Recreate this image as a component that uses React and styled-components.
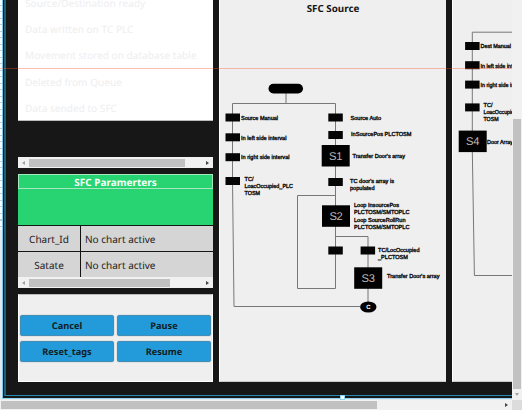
import React from "react";
import styled, { createGlobalStyle } from "styled-components";

const GlobalStyle = createGlobalStyle`
  * { box-sizing: border-box; }
  body { margin: 0; overflow: hidden; background: #f0f0f0; font-family: "Noto Sans", sans-serif; text-rendering: geometricPrecision; }
`;

const Window = styled.div`
  position: relative;
  display: grid;
  grid-template-columns: 512px 10px;
  grid-template-rows: 400px 10px;
  width: 522px;
  height: 410px;
  overflow: hidden;
`;

const Canvas = styled.div`
  display: grid;
  grid-template-columns: 2px 510px;
  overflow: hidden;
  background: #e4e9ec;
`;

const DesignGrid = styled.div`
  height: 230px;
  background: repeating-linear-gradient(#f8fbfd 0 5px, #b9cdd9 5px 6px, #f8fbfd 6px 6.5px);
`;

const Frame = styled.div`
  height: 399px;
  border-left: 1px solid #80cbe9;
  border-bottom: 1px solid #8fd3ef;
  background: #171717;
  padding: 0 0 2px 1px;
`;

const Selection = styled.div`
  height: 396px;
  border-left: 2px solid #205d76;
  border-bottom: 1px solid #2589b2;
  padding-left: 12px;
  display: grid;
  grid-template-columns: 195px 227px 60px;
  column-gap: 6px;
`;

const Sidebar = styled.div`
  display: flex;
  flex-direction: column;
  height: 382px;
`;

const StatusPanel = styled.div`
  height: 121px;
  margin-bottom: 36px;
  background: #fff;
  border-bottom: 1px solid #bbb;
  padding-left: 7px;
  overflow: hidden;
`;

const StatusList = styled.div`
  margin-top: -10px;
`;

const Status = styled.div`
  height: 26.2px;
  line-height: 26px;
  font-size: 10.1px;
  white-space: nowrap;
  color: #eeeeef;
`;

const ScrollTrack = styled.div`
  display: flex;
  align-items: center;
  height: ${(p) => p.$height || 11}px;
  background: #f1f1f1;
  padding-left: ${(p) => p.$start || 0}px;
  padding-right: ${(p) => p.$end ?? 4}px;
`;

const Thumb = styled.div`
  width: ${(p) => p.$width}px;
  height: ${(p) => p.$height || 8}px;
  margin-right: auto;
  background: #c1c1c1;
`;

const Arrow = styled.i`
  border: solid transparent;
  border-width: 2.5px 0 2.5px 3px;
  border-left-color: ${(p) => (p.$left ? "transparent" : "#444")};
  ${(p) => p.$left && "border-width: 2.5px 3px 2.5px 0; border-right-color: #a3a3a3; margin-right: 4px;"}
`;

const Parameters = styled.div`
  margin-top: 6px;
  height: 103px;
`;

const ParameterTitle = styled.div`
  height: 15px;
  border: 1px solid #a5e8bf;
  background: #28d372;
  color: #f5fff8;
  font-weight: 700;
  font-size: 10px;
  line-height: 14px;
  text-align: center;
`;

const GreenBlock = styled.div`
  height: 36px;
  background: #28d372;
`;

const ParameterRow = styled.div`
  display: grid;
  grid-template-columns: 63px 132px;
  height: ${(p) => p.$height}px;
  border-top: ${(p) => p.$line || 1}px solid #161616;
  background: #d5d5d5;
  color: #222;
  font-size: 10px;
  line-height: 26px;
`;

const Key = styled.div`
  text-align: center;
  border-right: 1px solid #111;
  height: 100%;
`;

const Value = styled.div`
  padding-left: 4px;
`;

const Actions = styled.div`
  display: grid;
  grid-template-columns: 94px 94px;
  grid-template-rows: 21px 21px;
  gap: 5px 3px;
  align-content: start;
  margin-top: 6px;
  height: 88px;
  padding: 20px 2px;
  background: #efefef;
  border: 1px solid #fff;
  border-top-color: #bbb;
  padding-left: 1px;
`;

const Action = styled.button`
  border: 1px solid #438db7;
  border-radius: 2px;
  padding: 0;
  background: #239bda;
  color: #111b22;
  font: 700 9.2px/19px "Noto Sans", sans-serif;
  text-rendering: geometricPrecision;
  box-shadow: 0 0 0 0.5px #d5d5d5;
`;

const ChartPanel = styled.div`
  height: 382px;
  overflow: hidden;
  background: #efefef;
  border-left: 1px solid #fff;
  border-bottom: 1px solid #ccc;
`;

const ChartTitle = styled.div`
  height: 18px;
  text-align: center;
  font-size: 9.8px;
  line-height: 17px;
  font-weight: 700;
  color: #161616;
`;

const Drawing = styled.svg`
  display: block;
  overflow: hidden;
`;

const Wire = styled.path`
  fill: none;
  stroke: #777;
  stroke-width: 1;
`;

const Caption = styled.text`
  font-family: "Liberation Sans", sans-serif;
  font-size: 5.8px;
  font-weight: 400;
  fill: #111;
  stroke: #111;
  stroke-width: 0.4px;
  text-rendering: geometricPrecision;
`;

const StateName = styled.text`
  font-family: "Liberation Sans", sans-serif;
  font-size: 11.2px;
  fill: #b9b9b9;
`;

const VerticalTrack = styled.div`
  display: flex;
  flex-direction: column;
  align-items: center;
  background: #f1f1f1;
  padding-top: 119px;
`;

const VerticalThumb = styled.div`
  width: 8px;
  height: 270px;
  background: #c1c1c1;
`;

const DownArrow = styled.i`
  margin-top: 4px;
  border: solid transparent;
  border-width: 3px 2.5px 0;
  border-top-color: #a3a3a3;
`;

const Corner = styled.div`
  background: #dcdcdc;
`;

const GuideLine = styled.div`
  position: absolute;
  top: 68px;
  left: 0;
  width: 512px;
  height: 1px;
  background: rgba(255, 75, 45, 0.36);
`;

const Handle = styled.div`
  position: absolute;
  left: 340px;
  top: 395px;
  width: 5px;
  height: 5px;
  background: #fff;
  border: 1px solid #8bd5f3;
`;

const statuses = ["Source/Destination ready", "Data written on TC PLC", "Movement stored on database table", "Deleted from Queue", "Data sended to SFC"];

const sourceLabels = [
  [241, 120, 37, "Source Manual"], [241, 139.5, 45.5, "In left side interval"],
  [241, 159.1, 48.5, "In right side interval"], [244.5, 180.7, 9, "TC/"],
  [244.5, 187.7, 48.5, "LoacOccupied_PLC"], [244.5, 195, 15.5, "TOSM"],
  [350.5, 119.5, 30.5, "Source Auto"], [351, 135.5, 60.5, "InSourcePos PLCTOSM"],
  [352.5, 157.5, 52.5, "Transfer Door's array"], [350, 182.6, 44, "TC door's array is"],
  [350, 189.5, 24.5, "populated"], [354, 207.4, 45, "Loop InsourcePos"],
  [354, 214.3, 55.5, "PLCTOSM/SMTOPLC"], [354, 222.3, 51.5, "Loop SourceRollRun"],
  [354, 229.4, 55.5, "PLCTOSM/SMTOPLC"], [378, 252.1, 41.5, "TC/LocOccupied"],
  [378, 259, 30, "_PLCTOSM"], [387, 278, 52.5, "Transfer Door's array"],
];

const destinationLabels = [
  [480.5, 48.3, 30.5, "Dest Manual"], [480.5, 67.5, 44, "In left side interval"],
  [480.5, 86.6, 47, "In right side interval"], [483.5, 107, 9, "TC/"],
  [483.5, 114, 46.5, "LoacOccupied_PLC"], [483.5, 121, 15, "TOSM"],
  [487, 143.6, 26, "Door Array"],
];

const Labels = ({ items }) => items.map(([x, y, width, text]) => (
  <Caption key={`${x}-${y}`} x={x} y={y} textLength={width} lengthAdjust="spacingAndGlyphs">{text}</Caption>
));

const Transition = ({ x, y }) => <rect x={x} y={y} width="14.5" height="8" fill="#050505" />;

const State = ({ x, y, name }) => (
  <g>
    <rect x={x} y={y} width="28" height="21.5" fill="#020202" />
    <StateName x={x + 7.4} y={y + 14.8} textLength="13.4" lengthAdjust="spacing">{name}</StateName>
  </g>
);

function SourceChart() {
  return (
    <Drawing width="226" height="364" viewBox="220 18 226 364">
      <Wire d="M286 93V103.5M232.5 180V103.5H335.5V288.5H297.5V195.5H335.5M335.5 236.5H368V303M360 306.5H234L232.5 180" />
      <rect x="268.5" y="83.7" width="34.5" height="9.8" rx="4.9" fill="#000" />
      {[113.5, 133.3, 153.2, 177].map((y) => <Transition key={y} x={225.5} y={y} />)}
      {[113.5, 131, 178, 246.5].map((y) => <Transition key={y} x={328.3} y={y} />)}
      <Transition x={360.6} y={246.5} />
      <State x={321.7} y={145} name="S1" />
      <State x={322} y={205.3} name="S2" />
      <State x={354.2} y={267.3} name="S3" />
      <ellipse cx="368.3" cy="307" rx="8.2" ry="5.6" fill="#000" />
      <text x="368.3" y="309.2" textAnchor="middle" fontFamily="Liberation Sans, sans-serif" fontSize="6" fontWeight="700" fill="#fff">C</text>
      <Labels items={sourceLabels} />
    </Drawing>
  );
}

function DestinationChart() {
  return (
    <Drawing width="59" height="382" viewBox="453 0 59 382">
      <Wire d="M512 32.2H472.3V150L474.4 275.5H512" />
      {[42, 61.2, 80.6, 103.4].map((y) => <Transition key={y} x={465.1} y={y} />)}
      <State x={458.7} y={130.6} name="S4" />
      <Labels items={destinationLabels} />
    </Drawing>
  );
}

const HorizontalScroll = ({ width }) => (
  <ScrollTrack $start={4}><Arrow $left /><Thumb $width={width} /><Arrow /></ScrollTrack>
);

export default function App() {
  return (
    <>
      <GlobalStyle />
      <Window>
        <Canvas>
          <DesignGrid />
          <Frame>
            <Selection>
              <Sidebar>
                <StatusPanel><StatusList>{statuses.map((s) => <Status key={s}>{s}</Status>)}</StatusList></StatusPanel>
                <HorizontalScroll width={156} />
                <Parameters>
                  <ParameterTitle>SFC Paramerters</ParameterTitle>
                  <GreenBlock />
                  <ParameterRow $height={26}><Key>Chart_Id</Key><Value>No chart active</Value></ParameterRow>
                  <ParameterRow $height={26}><Key>Satate</Key><Value>No chart active</Value></ParameterRow>
                </Parameters>
                <HorizontalScroll width={141} />
                <Actions>
                  {["Cancel", "Pause", "Reset_tags", "Resume"].map((name) => <Action key={name}>{name}</Action>)}
                </Actions>
              </Sidebar>
              <ChartPanel><ChartTitle>SFC Source</ChartTitle><SourceChart /></ChartPanel>
              <ChartPanel><DestinationChart /></ChartPanel>
            </Selection>
          </Frame>
        </Canvas>
        <VerticalTrack><VerticalThumb /><DownArrow /></VerticalTrack>
        <ScrollTrack $height={10} $start={1}><Thumb $width={376} /><Arrow /></ScrollTrack>
        <Corner />
        <GuideLine />
        <Handle />
      </Window>
    </>
  );
}
